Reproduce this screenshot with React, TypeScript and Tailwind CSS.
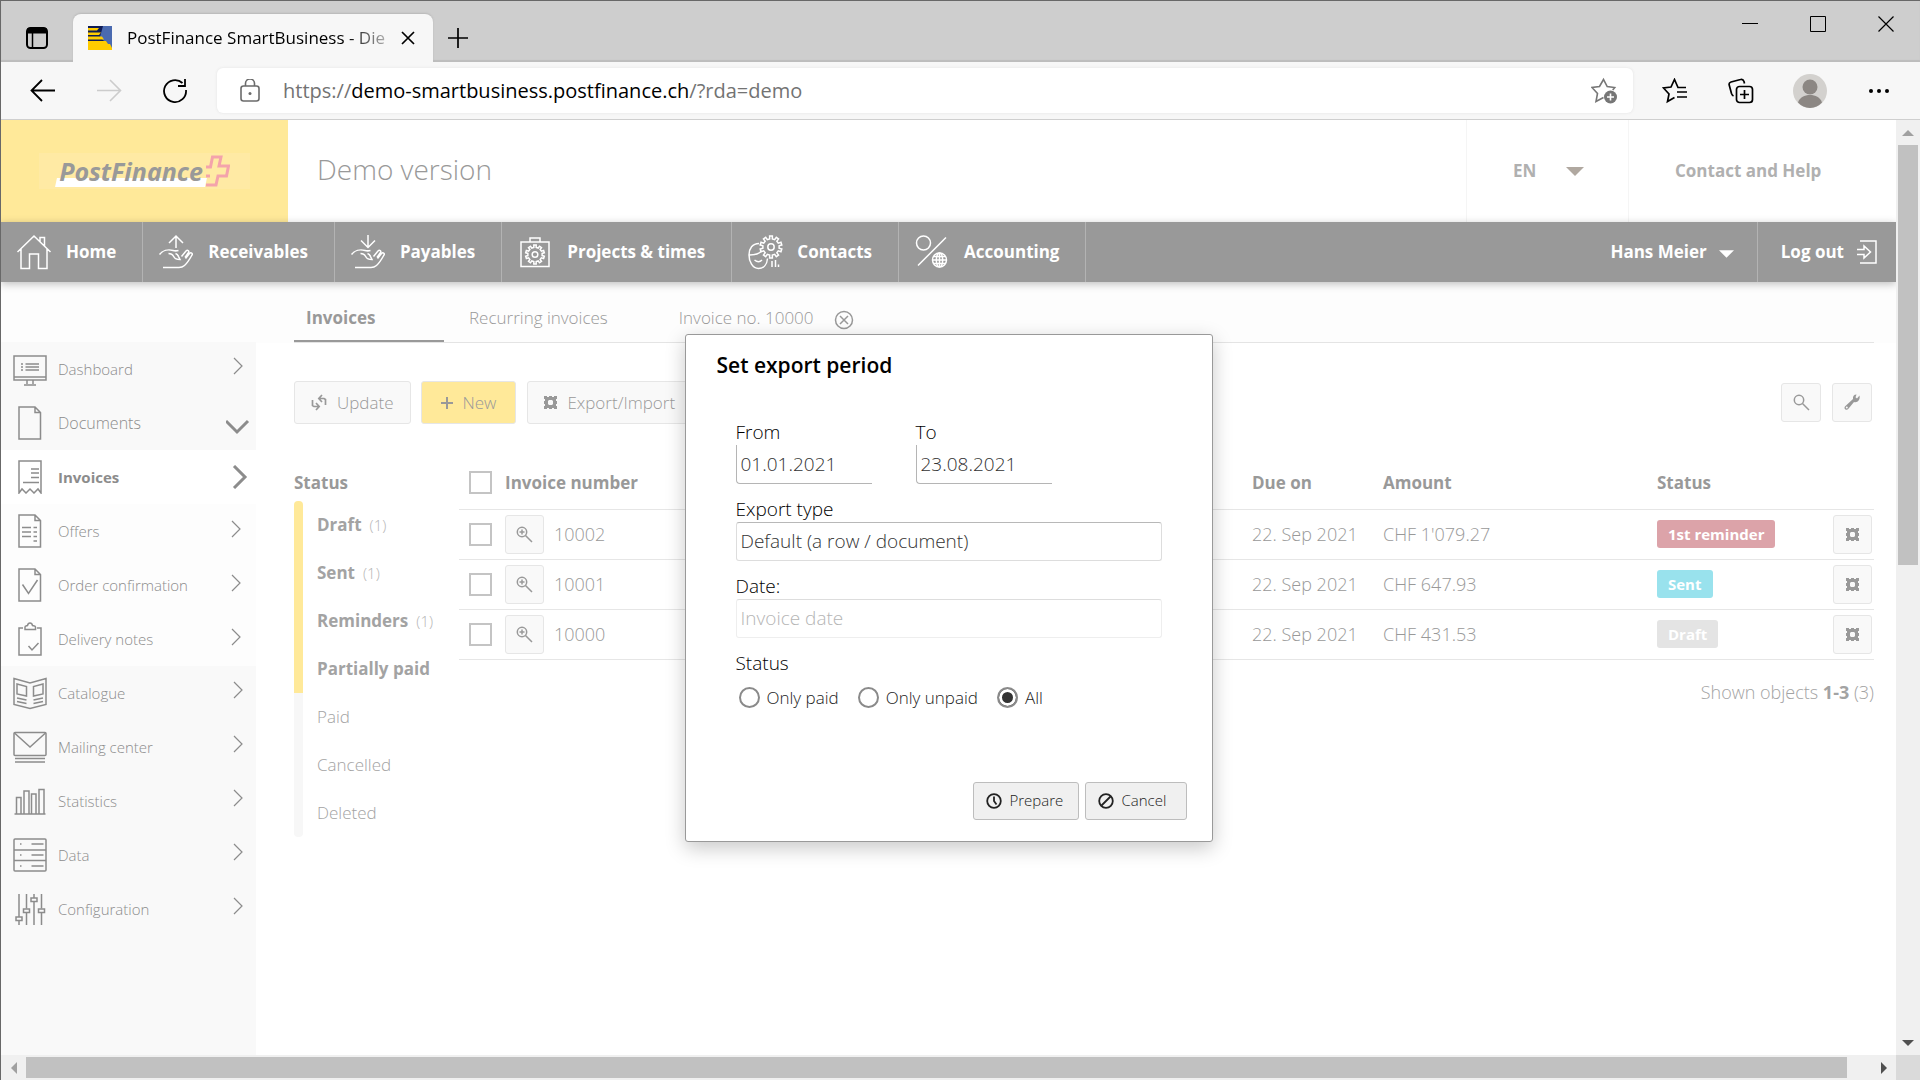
import React, { useId } from "react";

type IconProps = { children: React.ReactNode; w?: number; h?: number; sw?: number; className?: string };

function Svg({ children, w = 34, h = 34, sw = 1.5, className = "" }: IconProps) {
  return (
    <svg
      aria-hidden="true"
      width={w}
      height={h}
      viewBox={`0 0 ${w} ${h}`}
      fill="none"
      stroke="currentColor"
      strokeWidth={sw}
      className={`shrink-0 ${className}`}
    >
      {children}
    </svg>
  );
}

function gearPath(cx: number, cy: number, inner: number, outer: number, teeth: number) {
  const pts: string[] = [];
  const step = (Math.PI * 2) / teeth;
  for (let i = 0; i < teeth; i++) {
    const a = i * step - Math.PI / 2;
    const add = (r: number, t: number) =>
      pts.push(`${(cx + r * Math.cos(a + t * step)).toFixed(2)} ${(cy + r * Math.sin(a + t * step)).toFixed(2)}`);
    add(outer, -0.2);
    add(outer, 0.2);
    add(inner, 0.26);
    add(inner, 0.74);
  }
  return `M${pts.join("L")}Z`;
}

/* ---------- main navigation icons ---------- */

const HomeIcon = () => (
  <Svg w={36} h={36}>
    <path d="M1.500 18 18 2l16.500 16M5 15v19.500h8.500V20h9v14.500H31V15M24 7.500V3.500h4.500v9" />
  </Svg>
);

const handPath =
  "M1.500 20.500C4.500 16.500 10 15 15 16.500c2 .6 3.500.5 5.500 0M10.500 19.500c3.500 0 4.500 1.500 5.500 3.500 1 2 3 2.500 6 2.500l-1.500-3c-.5-1.500-1.500-2.500-3-3M23.500 22.500l4.500-5.500c1.500-1.500 3.500-.2 2.500 1.500l-3.500 5M27.500 24.500l4-5c1.500-1.500 3.500-.2 2.500 1.500-2.500 4.500-4.500 8-7.500 10.500-2 1.700-3.500 2-5.500 2H5";

const ReceivablesIcon = () => (
  <Svg w={36} h={36}>
    <path d={handPath} />
    <path d="M18 14V3M11 9l7-7 7 7" />
  </Svg>
);

const PayablesIcon = () => (
  <Svg w={36} h={36}>
    <path d={handPath} />
    <path d="M18 1v12M11 6.500l7 7 7-7" />
  </Svg>
);

const ProjectsIcon = () => (
  <Svg w={36} h={36}>
    <path d="M4 8h28v24.500H4zM13 8V4h10v4" />
    <path d={gearPath(18, 20.5, 7.2, 9.5, 10)} />
    <circle cx="18" cy="20.500" r="2.800" />
  </Svg>
);

const ContactsIcon = () => (
  <Svg w={36} h={36}>
    <path d="M12 9.500C5.500 9.500 2 14.500 2 21s3.500 13.500 9.500 13.500c5 0 8.500-4 9-10M2.500 21c5 0 9.500-1 12-4M7.500 26c2.500 2 5.500 2 7.500 0" />
    <path d={gearPath(24, 13, 8.2, 11, 10)} />
    <circle cx="24" cy="13" r="3.200" />
    <path d="M25 27v6M28.500 26v7M31.500 30.500V33" />
  </Svg>
);

const AccountingIcon = () => (
  <Svg w={36} h={36}>
    <circle cx="9.500" cy="9" r="7" />
    <path d="M32 3.500 4 31.500" />
    <circle cx="25.500" cy="26" r="7" />
    <ellipse cx="25.500" cy="26" rx="3.200" ry="7" />
    <path d="M18.500 26h14M19.500 22.500h12M19.500 29.500h12M25.500 19v14" />
  </Svg>
);

/* ---------- sidebar icons ---------- */

const DashboardIcon = () => (
  <Svg>
    <path d="M1 4h32v24H1zM1 25h32M14 28v4M20 28v4M11 33h12" />
    <path d="M8 12h2M8 15h2M8 18h2M12.500 12H26M12.500 15H26M12.500 18H26" />
  </Svg>
);
const sheet = "M6 1h16l5.500 5.500V33H6zM22 1v5.500h5.500";
const DocumentIcon = () => (
  <Svg>
    <path d={sheet} />
  </Svg>
);
const InvoiceIcon = () => (
  <Svg>
    <path d="M6 33V1h22v32l-3-4-4 4-4-4-4 4-4-4zM18 9h8M18 13h8M18 17.500h8M10 22.500h16" />
  </Svg>
);
const OfferIcon = () => (
  <Svg>
    <path d={sheet} />
    <path d="M9 13.500h9M9 18h9M9 22.500h9M20.500 13.500h3.500M20.500 18h3.500M20.500 22.500h3.500M20.500 27h3.500" />
  </Svg>
);
const OrderIcon = () => (
  <Svg>
    <path d={sheet} />
    <path d="m9.500 16.500 6 9 9-13.500" />
  </Svg>
);
const DeliveryIcon = () => (
  <Svg>
    <path d="M10 6H6v27h22V6h-4M12 7.500V5c0-1 1-1 2.500-1.500C15 1 16 1 17 1s2 0 2.500 2.500C21 4 22.500 4 22.500 5v2.500z" />
    <path d="m15.500 24 3.500 4 6.500-7" />
  </Svg>
);
const CatalogueIcon = () => (
  <Svg>
    <path d="M1 2.500 17 7l16-4.500v26L17 32.500 1 28.500z" />
    <path d="m4 8 9.500 2.500v9.500L4 18zM30 8l-9.500 2.500v9.500L30 18zM4 22l9.500 2M4 25.500l9.500 2M30 22l-9.500 2M30 25.500l-9.500 2" />
  </Svg>
);
const MailIcon = () => (
  <Svg>
    <rect x="1" y="2.500" width="32" height="23" rx="1" />
    <path d="m1.500 3 15.500 14L32.500 3M2 28.500h30M2 32h30" />
  </Svg>
);
const StatsIcon = () => (
  <Svg>
    <path d="M1.500 30h31M3.500 30V13.500H8V30M11 30V7h5v23M18.500 30V10H23v20M26 30V5.500h5V30" />
  </Svg>
);
const DataIcon = () => (
  <Svg>
    <rect x="1" y="1" width="32" height="32" rx="1" />
    <path d="M1 12h32M1 22.500h32M7 6h1.500M7 17h1.500M7 28h1.500M18.500 6h12M18.500 17h12M18.500 28h12" />
  </Svg>
);
const ConfigIcon = () => (
  <Svg>
    <path d="M6 2v23M6 29v4M13.500 2v14.500M13.500 20.500V33M21 2v4M21 10v23M28.500 2v14.500M28.500 20.500V33" />
    <path d="M3 25h6v3.500H3zM10.500 17h6v3.500h-6zM18 6h6v3.500h-6zM25.500 17h6v3.500h-6z" />
  </Svg>
);

/* ---------- small icons ---------- */

const CogBlock = () => (
  <Svg w={13} h={13} sw={0}>
    <path
      fill="currentColor"
      fillRule="evenodd"
      d="M0 0h3v1h2V0h3v1h2V0h3v3h-1v2h1v3h-1v2h1v3h-3v-1H8v1H5v-1H3v1H0v-3h1V8H0V5h1V3H0zM5 4 4 5v3l1 1h3l1-1V5L8 4z"
    />
  </Svg>
);
const ZoomPlus = () => (
  <Svg w={17} h={17}>
    <circle cx="6" cy="6" r="4.700" />
    <path d="m9.500 9.500 6.500 6.500M6 3.500v5M3.500 6h5" />
  </Svg>
);
const Magnifier = () => (
  <Svg w={17} h={17}>
    <circle cx="6" cy="6" r="4.700" />
    <path d="m9.500 9.500 6.500 6.500" />
  </Svg>
);
const Wrench = () => (
  <Svg w={17} h={17} sw={0}>
    <path
      fill="currentColor"
      d="M15.500 1.500 13 4.500l-1.500-1.300L12.500.5C10 .5 8.500 2.500 9 5L1.200 12.200c-1 1-.8 2.300 0 3s2.200.8 3-.2L10 8c3.500 1 6.500-2 5.500-6.500zM2.800 14.500a1 1 0 1 1 0-2 1 1 0 0 1 0 2z"
    />
  </Svg>
);
const Sync = () => (
  <Svg w={16} h={17} sw={1.7}>
    <path d="M1.500 6v5.500l1.500 1h4.500M5 9l3.200 3.500L5 16M14.500 11V5.500l-1.500-1H8M11 1 7.800 4.500 11 8" />
  </Svg>
);

function Caret({ className = "" }: { className?: string }) {
  return (
    <svg aria-hidden="true" viewBox="0 0 18 9" className={`shrink-0 ${className}`}>
      <path d="M0 0h18L9 9z" fill="currentColor" />
    </svg>
  );
}

function ScrollArrow({ dir }: { dir: "up" | "down" | "left" | "right" }) {
  const d = { up: "M6 3l6 6H0z", down: "M0 3h12L6 9z", left: "M9 0v12L3 6z", right: "M3 0v12l6-6z" }[dir];
  return (
    <svg aria-hidden="true" width="12" height="12" viewBox="0 0 12 12">
      <path d={d} fill="currentColor" />
    </svg>
  );
}

/* ---------- browser chrome ---------- */

function TabStrip() {
  return (
    <div className="flex h-[61px] shrink-0 bg-[#cecece] shadow-[inset_0_-2px_1px_#bdbdbd]">
      <button aria-label="Tab actions menu" className="flex w-[72px] items-center justify-center pt-3">
        <Svg w={24} h={24} sw={2}>
          <rect x="2" y="2" width="20" height="20" rx="3.500" />
          <path d="M2 5h20" strokeWidth="5" />
          <path d="M7.500 7v15" strokeWidth="1.500" />
        </Svg>
      </button>
      <div className="mt-[13px] flex w-[360px] items-center rounded-t-lg bg-[#f7f7f7] pl-[15px] shadow-[0_-1px_2px_#b8b8b8]">
        <svg aria-hidden="true" width="24" height="24" viewBox="0 0 24 24" className="shrink-0">
          <path d="M0 0h24v24H0z" fill="#0f1c55" />
          <path d="M24 0v23L12 11l3-11z" fill="#4a6ab0" />
          <path d="M0 2h11l-2 2.500H0zM0 6.500h13L11 9H0zM0 10.500h14l2 3H0zM0 15h18l2 3h2l2 4v2H0z" fill="#ffcc00" />
        </svg>
        <span className="ml-[15px] bg-linear-to-r from-black from-85% to-black/30 bg-clip-text text-[17px] leading-6 whitespace-nowrap text-transparent">
          PostFinance SmartBusiness - Die
        </span>
        <button aria-label="Close tab" className="mr-[18px] ml-auto">
          <Svg w={14} h={14} sw={1.7}>
            <path d="m1 1 12 12M13 1 1 13" />
          </Svg>
        </button>
      </div>
      <button aria-label="New tab" className="ml-[14px] pt-3">
        <Svg w={22} h={22} sw={1.7}>
          <path d="M11 1v20M1 11h20" />
        </Svg>
      </button>
      <div className="ml-auto flex h-[45px]">
        <button aria-label="Minimize" className="flex w-[68px] items-center justify-center">
          <Svg w={16} h={16} sw={1}>
            <path d="M0 7.500h16" />
          </Svg>
        </button>
        <button aria-label="Maximize" className="flex w-[68px] items-center justify-center">
          <Svg w={16} h={16} sw={1}>
            <path d="M.5.5h15v15H.5z" />
          </Svg>
        </button>
        <button aria-label="Close" className="flex w-[68px] items-center justify-center">
          <Svg w={16} h={16} sw={1.2}>
            <path d="m.5.5 15 15M15.500.5l-15 15" />
          </Svg>
        </button>
      </div>
    </div>
  );
}

function Toolbar() {
  return (
    <div className="flex h-[58px] shrink-0 items-center border-b border-[#cfcfcf] bg-[#f7f7f7] pr-2 pl-[9px]">
      <button aria-label="Back" className="flex w-[66px] justify-center">
        <Svg w={26} h={24} sw={1.8}>
          <path d="M12 1 1.500 11.500 12 22M2 11.500h23" />
        </Svg>
      </button>
      <button aria-label="Forward" className="flex w-[66px] justify-center text-[#cccccc]">
        <Svg w={26} h={24} sw={1.6}>
          <path d="M14 1 24.500 11.500 14 22M24 11.500H1" />
        </Svg>
      </button>
      <button aria-label="Refresh" className="flex w-[66px] justify-center">
        <Svg w={26} h={26} sw={1.8}>
          <path d="M24 12a11 11 0 1 1-3.500-7M23 1v7h-7" />
        </Svg>
      </button>
      <div className="ml-[9px] flex h-[45px] min-w-0 flex-1 items-center rounded-md bg-white pr-3.5 pl-[23px] shadow-[0_0_3px_#e2e2e2]">
        <Svg w={20} h={24} sw={1.6} className="text-[#6b6b6b]">
          <rect x="1" y="7" width="18" height="15" rx="2.500" />
          <path d="M5.500 7V4.500a4.500 4.500 0 0 1 9 0V7" />
          <circle cx="10" cy="14.500" r="1.500" fill="currentColor" stroke="none" />
        </Svg>
        <a href="#address" className="ml-[23px] flex-1 truncate text-xl text-[#737373]">
          https://<span className="text-black">demo-smartbusiness.postfinance.ch</span>/?rda=demo
        </a>
        <button aria-label="Add this page to favourites" className="text-[#767676]">
          <Svg w={28} h={28} sw={1.6}>
            <path d="M12.500 20.500 5 24.500l1.500-8L1 10.500l7.500-1L12.500 2.500l3.700 7 7.500 1-2 2.500" />
            <circle cx="19.500" cy="20" r="6.500" fill="currentColor" stroke="none" />
            <path d="M19.500 16.500v7M16 20h7" stroke="#fff" />
          </Svg>
        </button>
      </div>
      <button aria-label="Favourites" className="ml-[9px] flex w-[66px] justify-center">
        <Svg w={26} h={26} sw={1.7}>
          <path d="M24 9.500h-8L12.500 1.500 9 9l-7.500 1L7 16 5.500 23.500l7-4M15 14h10M15 19h10" />
        </Svg>
      </button>
      <button aria-label="Collections" className="flex w-[66px] justify-center">
        <Svg w={26} h={26} sw={1.7}>
          <rect x="8.500" y="8.500" width="16" height="16" rx="3" />
          <path d="M16.500 12v9M12 16.500h9M5.500 18c-1-.5-1.500-1-2-2.500L1.200 7C.8 5.500 1.500 4.500 3 4L12.500 1.500c1.500-.5 3 .5 3.500 2l.5 2" />
        </Svg>
      </button>
      <button aria-label="Profile" className="flex w-[72px] justify-center">
        <svg aria-hidden="true" width="34" height="34" viewBox="0 0 34 34">
          <circle cx="17" cy="17" r="17" fill="#d3d1ce" />
          <circle cx="17" cy="13" r="7.500" fill="#8c8783" />
          <path d="M5 28.500C7 23 11.500 21 17 21s10 2 12 7.500A17 17 0 0 1 17 34a17 17 0 0 1-12-5.500z" fill="#8c8783" />
        </svg>
      </button>
      <button aria-label="Settings and more" className="flex w-[66px] justify-center">
        <svg aria-hidden="true" width="20" height="4" viewBox="0 0 20 4">
          <circle cx="2" cy="2" r="2" />
          <circle cx="10" cy="2" r="2" />
          <circle cx="18" cy="2" r="2" />
        </svg>
      </button>
    </div>
  );
}

/* ---------- application ---------- */

function Header() {
  return (
    <header className="flex h-[102px] shrink-0 bg-white">
      <a href="#home" className="flex w-[287px] items-center justify-center bg-[#ffe999]">
        <span className="flex h-9 w-[211px] items-center justify-center gap-0.5 bg-[#ffeaa4]">
          <span className="relative text-[25px] leading-8 font-bold text-[#999999] italic">
            <span className="absolute inset-x-[-3px] bottom-0 h-[9px] -skew-x-12 bg-white" />
            <span className="relative">PostFinance</span>
          </span>
          <Svg w={25} h={32} sw={3} className="text-[#f4a3ab]">
            <path d="M1 12h4.500L7.500 2H16l-2 9h9.500l-2 10H13l-2 9H1M1 21h4" />
          </Svg>
        </span>
      </a>
      <div className="flex flex-1 items-center pb-1 pl-[29px] text-[28px] font-light text-[#999999]">Demo version</div>
      <button className="flex w-[162px] items-center border-l border-[#f5f5f5] pl-[46px] text-[17px] font-bold text-[#b0b0b0]">
        <span className="w-[53px] text-left">EN</span>
        <Caret className="h-[9px] w-[18px] text-[#b0a8a0]" />
      </button>
      <a href="#help" className="flex w-[268px] items-center border-l border-[#f5f5f5] pl-[46px] text-[17px] font-bold text-[#b0b0b0]">
        Contact and Help
      </a>
    </header>
  );
}

const navItems = [
  { label: "Home", icon: <HomeIcon /> },
  { label: "Receivables", icon: <ReceivablesIcon /> },
  { label: "Payables", icon: <PayablesIcon /> },
  { label: "Projects & times", icon: <ProjectsIcon /> },
  { label: "Contacts", icon: <ContactsIcon /> },
  { label: "Accounting", icon: <AccountingIcon /> },
];

function MainNav() {
  return (
    <nav className="relative flex h-[60px] shrink-0 bg-[#999999] text-[17px] font-bold whitespace-nowrap text-white shadow-[0_2px_8px_rgba(0,0,0,0.25)]">
      {navItems.map((n) => (
        <a key={n.label} href="#nav" className="flex items-center gap-3.5 border-r border-[#b3b3b3] pr-[26px] pl-[15px]">
          {n.icon}
          {n.label}
        </a>
      ))}
      <button className="ml-auto flex items-center gap-3 pr-[23px]">
        Hans Meier
        <Caret className="mt-1 h-2 w-[15px]" />
      </button>
      <a href="#logout" className="flex items-center gap-3 border-l border-[#b3b3b3] pr-[19px] pl-[23px]">
        Log out
        <Svg w={21} h={24}>
          <path d="M4 1h16v22H4M1 9.500h7V6l6.500 6L8 18v-3.500H1" />
        </Svg>
      </a>
    </nav>
  );
}

type SideItem = { label: string; icon: React.ReactNode; kind?: "open" | "active" | "sub" };

const sideItems: SideItem[] = [
  { label: "Dashboard", icon: <DashboardIcon /> },
  { label: "Documents", icon: <DocumentIcon />, kind: "open" },
  { label: "Invoices", icon: <InvoiceIcon />, kind: "active" },
  { label: "Offers", icon: <OfferIcon />, kind: "sub" },
  { label: "Order confirmation", icon: <OrderIcon />, kind: "sub" },
  { label: "Delivery notes", icon: <DeliveryIcon />, kind: "sub" },
  { label: "Catalogue", icon: <CatalogueIcon /> },
  { label: "Mailing center", icon: <MailIcon /> },
  { label: "Statistics", icon: <StatsIcon /> },
  { label: "Data", icon: <DataIcon /> },
  { label: "Configuration", icon: <ConfigIcon /> },
];

function Sidebar() {
  return (
    <aside className="w-[255px] shrink-0 bg-[#fdfdfd] pt-[60px]">
      <nav className="flex h-full flex-col bg-[#f9f9f9] text-[#8c8c8c]">
        {sideItems.map((s) => (
          <a
            key={s.label}
            href="#side"
            className={`flex h-[54px] shrink-0 items-center pr-1.5 pl-3 ${
              s.kind === "active"
                ? "bg-white text-[15px] font-bold"
                : s.kind === "open"
                  ? "text-base font-light"
                  : s.kind === "sub"
                    ? "bg-[#fdfdfd] text-[15px] font-light"
                    : "text-[15px] font-light"
            }`}
          >
            {s.icon}
            <span className="ml-[11px] flex-1">{s.label}</span>
            {s.kind === "open" ? (
              <Svg w={24} h={24} sw={3}>
                <path d="m0 10 11 11 11-11" />
              </Svg>
            ) : s.kind === "active" ? (
              <Svg w={24} h={24} sw={3}>
                <path d="m8 1 11 11L8 23" />
              </Svg>
            ) : (
              <Svg w={24} h={24} sw={1.2}>
                <path d={s.kind === "sub" ? "m6 2 8 8-8 8" : "m8 1 8 8-8 8"} />
              </Svg>
            )}
          </a>
        ))}
      </nav>
    </aside>
  );
}

const filters: { label: string; count?: number; bold?: boolean }[] = [
  { label: "Draft", count: 1, bold: true },
  { label: "Sent", count: 1, bold: true },
  { label: "Reminders", count: 1, bold: true },
  { label: "Partially paid", bold: true },
  { label: "Paid" },
  { label: "Cancelled" },
  { label: "Deleted" },
];

function StatusFilter() {
  return (
    <section className="w-[165px] shrink-0">
      <h2 className="h-11 pt-3.5 text-[17px] leading-6 font-bold text-[#999999]">Status</h2>
      <div className="flex gap-3.5">
        <div className="flex w-[9px] flex-col">
          <div className="flex-[4] rounded-t bg-[#ffe999]" />
          <div className="flex-[3] rounded-b bg-[#f7f7f7]" />
        </div>
        <ul className="text-[17px] text-[#a3a3a3]">
          {filters.map((f) => (
            <li key={f.label} className={`flex h-12 items-center gap-2 ${f.bold ? "font-bold" : "font-light"}`}>
              <a href="#filter">{f.label}</a>
              {f.count && <span className="text-[15px] font-light text-[#b5b5b5]">({f.count})</span>}
            </li>
          ))}
        </ul>
      </div>
    </section>
  );
}

const rows = [
  { no: "10002", due: "22. Sep 2021", amount: "CHF 1'079.27", status: "1st reminder", tone: "bg-[#dca3a9]" },
  { no: "10001", due: "22. Sep 2021", amount: "CHF 647.93", status: "Sent", tone: "bg-[#99e2ed]" },
  { no: "10000", due: "22. Sep 2021", amount: "CHF 431.53", status: "Draft", tone: "bg-[#e4e4e4]" },
];

function Check({ label }: { label: string }) {
  return (
    <input
      type="checkbox"
      aria-label={label}
      className="ml-0.5 block size-[23px] appearance-none border-2 border-[#c4c4c4] bg-white checked:bg-[#c4c4c4]"
    />
  );
}

const iconButton = "flex items-center justify-center rounded-[3px] border border-[#e6e6e6] bg-[#f9f9f9] text-[#999999]";

function InvoiceTable() {
  return (
    <div className="min-w-0 flex-1">
      <table className="w-full table-fixed text-left text-[#999999]">
        <colgroup>
          <col className="w-[38px]" />
          <col />
          <col className="w-[131px]" />
          <col className="w-[274px]" />
          <col className="w-[176px]" />
          <col className="w-[49px]" />
        </colgroup>
        <thead>
          <tr className="h-[52px] border-b border-[#e6e6e6] text-[17px] *:pl-2 *:font-bold">
            <th>
              <Check label="Select all invoices" />
            </th>
            <th>Invoice number</th>
            <th>Due on</th>
            <th>Amount</th>
            <th>Status</th>
            <th />
          </tr>
        </thead>
        <tbody className="text-lg leading-6 font-light">
          {rows.map((r) => (
            <tr key={r.no} className="h-[50px] border-b border-[#e6e6e6] *:pl-2">
              <td>
                <Check label={`Select invoice ${r.no}`} />
              </td>
              <td>
                <div className="flex items-center gap-2.5">
                  <button aria-label={`Open invoice ${r.no}`} className={`${iconButton} size-[39px]`}>
                    <ZoomPlus />
                  </button>
                  {r.no}
                </div>
              </td>
              <td>{r.due}</td>
              <td>{r.amount}</td>
              <td>
                <span className={`block h-7 w-fit rounded-[3px] px-[11px] text-[15px] leading-7 font-bold text-white ${r.tone}`}>
                  {r.status}
                </span>
              </td>
              <td>
                <button aria-label={`Actions for invoice ${r.no}`} className={`${iconButton} size-[39px]`}>
                  <CogBlock />
                </button>
              </td>
            </tr>
          ))}
        </tbody>
      </table>
      <p className="mt-5 text-right text-lg leading-6 font-light text-[#a3a3a3]">
        Shown objects <b className="font-bold">1-3</b> (3)
      </p>
    </div>
  );
}

function Workspace() {
  const button = "flex h-[43px] items-center rounded-[3px] border border-[#e6e6e6] text-[17px] font-light text-[#999999]";
  return (
    <main className="min-w-0 flex-1">
      <div className="bg-[#fdfdfd] pr-[22px] pl-[38px]">
        <div className="flex h-[61px] border-b border-[#e4e4e4] text-[17px] leading-6 text-[#999999] *:pt-6">
          <a href="#invoices" className="w-[150px] border-b-2 border-[#999999] pl-3 font-bold">
            Invoices
          </a>
          <a href="#recurring" className="ml-[25px] font-light">
            Recurring invoices
          </a>
          <a href="#invoice-10000" className="ml-[71px] font-light">
            Invoice no. 10000
          </a>
          <button aria-label="Close invoice tab" className="ml-5 self-start">
            <Svg w={20} h={24}>
              <circle cx="10" cy="14" r="8.500" />
              <path d="m6 10 8 8M14 10l-8 8" />
            </Svg>
          </button>
        </div>
      </div>
      <div className="pr-[22px] pl-[38px]">
        <div className="flex pt-[38px]">
          <button className={`${button} gap-2.5 bg-[#f9f9f9] px-4`}>
            <Sync />
            Update
          </button>
          <button className={`${button} ml-2.5 gap-2.5 bg-[#ffe999] px-[19px]`}>
            <Svg w={12} h={12} sw={2}>
              <path d="M6 0v12M0 6h12" />
            </Svg>
            New
          </button>
          <button className={`${button} ml-[11px] gap-2.5 bg-[#f9f9f9] px-4`}>
            <CogBlock />
            Export/Import
          </button>
          <button aria-label="Search" className={`${iconButton} ml-auto h-[39px] w-10 self-center`}>
            <Magnifier />
          </button>
          <button aria-label="Settings" className={`${iconButton} mr-0.5 ml-[11px] h-[39px] w-10 self-center`}>
            <Wrench />
          </button>
        </div>
        <div className="flex pt-[33px]">
          <StatusFilter />
          <InvoiceTable />
        </div>
      </div>
    </main>
  );
}

function DateField({ label, value }: { label: string; value: string }) {
  const id = useId();
  return (
    <div className="w-[136px]">
      <label htmlFor={id} className="block leading-[26px] text-black">
        {label}
      </label>
      <input
        id={id}
        defaultValue={value}
        className="block h-[39px] w-full rounded-bl-sm border-b border-l border-[#b5b5b5] pl-1 text-[#333333] outline-none"
      />
    </div>
  );
}

function SelectField({ label, value, disabled }: { label: string; value: string; disabled?: boolean }) {
  const id = useId();
  return (
    <div className="mt-3">
      <label htmlFor={id} className="block leading-[26px] text-black">
        {label}
      </label>
      <select
        id={id}
        disabled={disabled}
        className="block h-[39px] w-full appearance-none rounded-[3px] border border-[#dddddd] border-t-[#b8b8b8] bg-white pl-1 text-[#333333] disabled:border-[#eeeeee] disabled:border-t-[#dddddd] disabled:text-[#b5b5b5] disabled:opacity-100"
      >
        <option>{value}</option>
      </select>
    </div>
  );
}

function ExportDialog() {
  const button =
    "flex h-[38px] items-center gap-2 rounded-[3px] border border-[#bdbdbd] bg-[#f0f0f0] text-[15px] font-light text-[#222222]";
  return (
    <div
      role="dialog"
      aria-labelledby="export-title"
      className="w-[528px] rounded-[3px] border border-[#999999] bg-white pt-4 pr-[25px] pb-[21px] pl-[31px] shadow-[0_6px_20px_rgba(0,0,0,0.22)]"
    >
      <h1 id="export-title" className="text-[21px] leading-7 font-semibold text-black">
        Set export period
      </h1>
      <form className="mt-10" onSubmit={(e) => e.preventDefault()}>
        <div className="pr-[25px] pl-[19px] text-[19px] font-light">
          <div className="flex gap-11">
            <DateField label="From" value="01.01.2021" />
            <DateField label="To" value="23.08.2021" />
          </div>
          <SelectField label="Export type" value="Default (a row / document)" />
          <SelectField label="Date:" value="Invoice date" disabled />
          <fieldset className="mt-3">
            <legend className="leading-[26px] text-black">Status</legend>
            <div className="mt-[11px] flex gap-[19px] pl-[3px] text-[17px] leading-[21px] text-[#222222]">
              {["Only paid", "Only unpaid", "All"].map((o) => (
                <label key={o} className="flex items-center gap-[7px]">
                  <input
                    type="radio"
                    name="paid"
                    defaultChecked={o === "All"}
                    className="size-[21px] appearance-none rounded-full border-2 border-[#8a8a8a] bg-white checked:bg-[#333333] checked:shadow-[inset_0_0_0_3px_white]"
                  />
                  {o}
                </label>
              ))}
            </div>
          </fieldset>
        </div>
        <div className="mt-[74px] flex justify-end gap-1.5">
          <button className={`${button} w-[106px] pl-3`}>
            <Svg w={16} h={16} sw={1.8}>
              <circle cx="8" cy="8" r="6.800" />
              <path d="M8 3.500V8l2.500 3.500" />
            </Svg>
            Prepare
          </button>
          <button type="button" className={`${button} w-[102px] pl-3`}>
            <Svg w={16} h={16} sw={1.8}>
              <circle cx="8" cy="8" r="6.800" />
              <path d="m3.500 12.500 9-9" />
            </Svg>
            Cancel
          </button>
        </div>
      </form>
    </div>
  );
}

export default function App() {
  return (
    <div className="flex h-screen flex-col overflow-hidden border-t border-l border-[#686868] bg-white font-['Open_Sans','Noto_Sans',sans-serif] text-black">
      <TabStrip />
      <Toolbar />
      <div className="flex min-h-0 flex-1">
        <div className="relative flex min-w-0 flex-1 flex-col overflow-hidden">
          <Header />
          <MainNav />
          <div className="flex min-h-0 flex-1">
            <Sidebar />
            <Workspace />
          </div>
          <div className="absolute inset-0 flex items-center justify-center">
            <ExportDialog />
          </div>
        </div>
        <div className="flex w-6 shrink-0 flex-col bg-[#f0f0f0] px-0.5">
          <div className="flex h-[25px] items-center justify-center text-[#a0a0a0]">
            <ScrollArrow dir="up" />
          </div>
          <div className="min-h-0 flex-1">
            <div className="h-[47.5%] bg-[#c1c1c1]" />
          </div>
          <div className="flex h-[25px] items-center justify-center text-[#505050]">
            <ScrollArrow dir="down" />
          </div>
        </div>
      </div>
      <div className="flex h-[25px] shrink-0">
        <div className="flex flex-1 items-stretch bg-[#f0f0f0] py-0.5">
          <div className="flex w-[25px] items-center justify-center text-[#a0a0a0]">
            <ScrollArrow dir="left" />
          </div>
          <div className="flex-1">
            <div className="h-full w-[98.7%] bg-[#c1c1c1]" />
          </div>
          <div className="flex w-[25px] items-center justify-center text-[#505050]">
            <ScrollArrow dir="right" />
          </div>
        </div>
        <div className="w-6 bg-[#dadada]" />
      </div>
    </div>
  );
}
